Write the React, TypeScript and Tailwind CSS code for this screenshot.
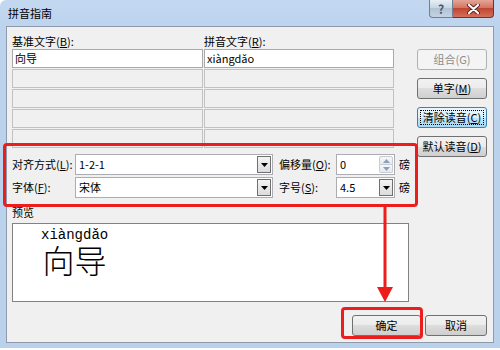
import React from 'react';

const FONT = "font-['Noto_Sans_CJK_SC','Liberation_Sans',sans-serif]";

function Key({ k }: { k: string }) {
  return <span className="underline underline-offset-[1px]">{k}</span>;
}

function WinButton({
  children,
  className = '',
  disabled = false,
  focused = false,
}: {
  children: React.ReactNode;
  className?: string;
  disabled?: boolean;
  focused?: boolean;
}) {
  const base = disabled
    ? 'border-[#adb2b5] bg-[#f4f4f4] text-[#8d8d8d]'
    : focused
      ? 'border-[#3c7fb1] bg-[linear-gradient(#eaf6fd,#d9f0fc_50%,#bee6fd_50%,#a7d9f5)] text-black'
      : 'border-[#707070] bg-[linear-gradient(#f2f2f2,#ebebeb_50%,#dddddd_50%,#cfcfcf)] text-black';
  return (
    <div
      className={`relative flex h-[21px] items-center justify-center rounded-[3px] border text-[11px] leading-none ${base} ${className}`}
    >
      {focused && <div className="absolute inset-[2px] border border-dotted border-black" />}
      <span className="relative">{children}</span>
    </div>
  );
}

function ComboArrow() {
  return (
    <div className="my-[1px] mr-[1px] flex w-[14px] items-center justify-center border border-[#707070] bg-[linear-gradient(#f4f4f4,#dcdcdc)]">
      <svg width="7" height="4" viewBox="0 0 7 4">
        <path d="M0 0h7L3.5 4z" fill="#000" />
      </svg>
    </div>
  );
}

function Combo({ value, className = '' }: { value: string; className?: string }) {
  return (
    <div className={`flex h-[21px] border border-[#abadb3] bg-white ${className}`}>
      <div className="flex flex-1 items-center pl-[3px] text-[11px]">{value}</div>
      <ComboArrow />
    </div>
  );
}

function Spin({ value }: { value: string }) {
  return (
    <div className="flex h-[21px] w-[59px] border border-[#abadb3] bg-white">
      <div className="flex flex-1 items-center pl-[3px] text-[11px]">{value}</div>
      <div className="my-[1px] mr-[1px] flex w-[14px] flex-col">
        <div className="flex flex-1 items-center justify-center rounded-t-[2px] border border-[#c8ccd2] bg-[linear-gradient(#f6f7f9,#e6e9ee)]">
          <svg width="7" height="4" viewBox="0 0 7 4">
            <path d="M0 4h7L3.5 0z" fill="#8aa0bc" />
          </svg>
        </div>
        <div className="flex flex-1 items-center justify-center rounded-b-[2px] border border-t-0 border-[#c8ccd2] bg-[linear-gradient(#f6f7f9,#e6e9ee)]">
          <svg width="7" height="4" viewBox="0 0 7 4">
            <path d="M0 0h7L3.5 4z" fill="#8aa0bc" />
          </svg>
        </div>
      </div>
    </div>
  );
}

const rows = [
  { base: '向导', pinyin: 'xiàngdǎo', active: true },
  { base: '', pinyin: '', active: false },
  { base: '', pinyin: '', active: false },
  { base: '', pinyin: '', active: false },
  { base: '', pinyin: '', active: false },
];

export default function App() {
  return (
    <div className={`relative h-[350px] w-[500px] overflow-hidden bg-white text-black ${FONT}`}>
      <div className="flex h-[348px] flex-col rounded-tl-[6px] bg-[linear-gradient(#c3d8f0,#bcd3ee_30px,#b9d1ea)] px-[6px] pb-[5px]">
        {/* title bar */}
        <div className="flex h-[26px] items-start">
          <div className="flex h-full items-center pl-[2px] text-[11px]">拼音指南</div>
          <div className="ml-auto flex h-[18px]">
            <div className="flex w-[24px] items-center justify-center rounded-bl-[4px] border border-t-0 border-[#6f7f95] bg-[linear-gradient(#e8eef5,#c6d3e2_50%,#b2c2d6_50%,#c5d3e3)] text-[12px] font-bold text-[#4a5668]">
              ?
            </div>
            <div className="flex w-[41px] items-center justify-center rounded-br-[4px] border border-l-0 border-t-0 border-[#7a2e24] bg-[linear-gradient(#e6a597,#d0705e_50%,#c14631_50%,#d2705c)]">
              <svg width="13" height="10" viewBox="0 0 13 10">
                <path d="M2 1l9 8M11 1l-9 8" stroke="#5a2018" strokeWidth="4" strokeLinecap="round" />
                <path d="M2 1l9 8M11 1l-9 8" stroke="#fff" strokeWidth="2.2" strokeLinecap="round" />
              </svg>
            </div>
          </div>
        </div>

        {/* client area */}
        <div className="flex flex-1 flex-col border border-[#8f9bab] bg-[#f0f0f0]">
          <div className="flex gap-[7px] pl-[5px] pt-[6px]">
            {/* left column */}
            <div className="flex w-[398px] flex-col">
              <div className="flex h-[16px] items-center text-[11px]">
                <div className="w-[192px]">
                  基准文字(<Key k="B" />):
                </div>
                <div>
                  拼音文字(<Key k="R" />):
                </div>
              </div>
              <div className="flex w-[382px] flex-col gap-px">
                {rows.map((r, i) => (
                  <div key={i} className="flex h-[19px] gap-px">
                    <div
                      className={`flex w-[191px] items-center border pl-[2px] text-[11px] ${
                        r.active ? 'border-[#a9a9a9] bg-white' : 'border-[#c2c2c2] bg-[#f0f0f0]'
                      }`}
                    >
                      {r.base}
                    </div>
                    <div
                      className={`flex flex-1 items-center border pl-[2px] text-[11px] ${
                        r.active ? 'border-[#a9a9a9] bg-white' : 'border-[#c2c2c2] bg-[#f0f0f0]'
                      }`}
                    >
                      {r.pinyin}
                    </div>
                  </div>
                ))}
              </div>

              <div className="mt-[6px] flex flex-col gap-[2px] text-[11px]">
                <div className="flex h-[21px] items-center">
                  <div className="w-[63px]">
                    对齐方式(<Key k="L" />):
                  </div>
                  <Combo value="1-2-1" className="w-[198px]" />
                  <div className="ml-[6px] w-[57px]">
                    偏移量(<Key k="O" />):
                  </div>
                  <Spin value="0" />
                  <div className="ml-[4px]">磅</div>
                </div>
                <div className="flex h-[21px] items-center">
                  <div className="w-[63px]">
                    字体(<Key k="F" />):
                  </div>
                  <Combo value="宋体" className="w-[198px]" />
                  <div className="ml-[6px] w-[57px]">
                    字号(<Key k="S" />):
                  </div>
                  <Combo value="4.5" className="w-[59px]" />
                  <div className="ml-[4px]">磅</div>
                </div>
              </div>

              <div className="mt-[5px] flex h-[18px] items-center text-[11px]">预览</div>
              <div className="mt-[2px] flex h-[79px] w-[397px] items-start border border-[#828282] bg-white pl-[28px] pt-[4px]">
                <div className="flex flex-col items-center">
                  <div className="font-['Liberation_Mono',monospace] text-[14px] leading-[14px]">xiàngdǎo</div>
                  <div className="mt-[1px] text-[32px] font-light leading-[32px]">向导</div>
                </div>
              </div>
            </div>

            {/* right column */}
            <div className="mt-[16px] flex w-[70px] flex-col gap-[8px]">
              <WinButton disabled>组合(G)</WinButton>
              <WinButton>
                单字(<Key k="M" />)
              </WinButton>
              <WinButton focused>
                清除读音(<Key k="C" />)
              </WinButton>
              <WinButton>
                默认读音(<Key k="D" />)
              </WinButton>
            </div>
          </div>

          <div className="mt-auto flex justify-end gap-[4px] pb-[6px] pr-[6px]">
            <WinButton className="w-[69px]">确定</WinButton>
            <WinButton className="w-[62px]">取消</WinButton>
          </div>
        </div>
      </div>

      {/* red annotations */}
      <div className="absolute left-[3px] top-[143px] h-[64px] w-[415px] rounded-[4px] border-[3px] border-[#ee1d1d]" />
      <div className="absolute left-[341px] top-[307px] h-[32px] w-[82px] rounded-[4px] border-[3px] border-[#ee1d1d]" />
      <svg className="absolute left-[374px] top-[207px]" width="22" height="97" viewBox="0 0 22 97">
        <path d="M11 0V84" stroke="#ee1d1d" strokeWidth="3" />
        <path d="M3 80h16L11 95z" fill="#ee1d1d" />
      </svg>
    </div>
  );
}
